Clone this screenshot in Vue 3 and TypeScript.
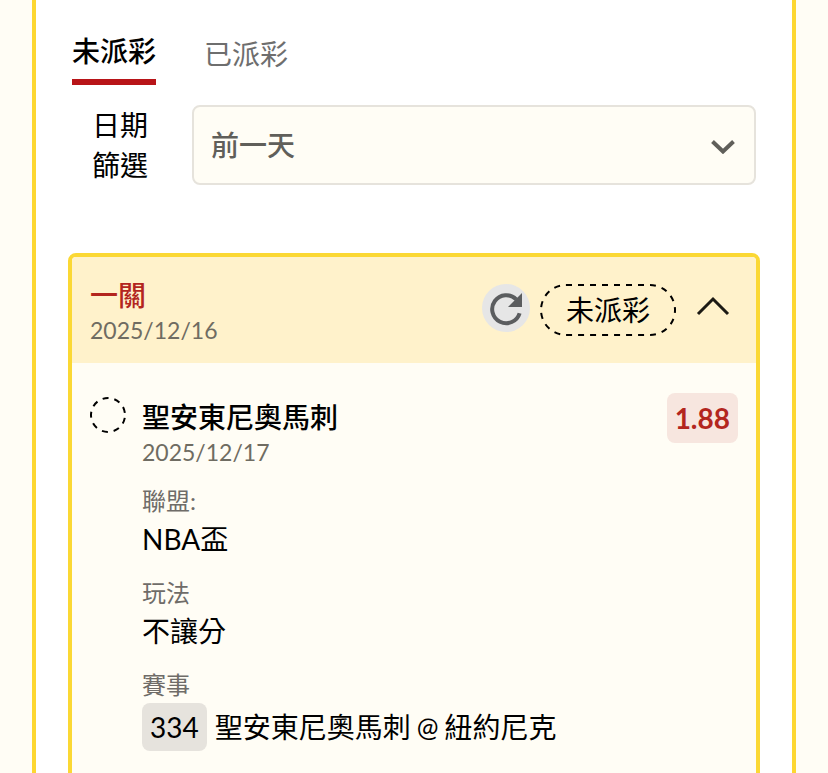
<script setup lang="ts">
import { ref } from 'vue'

interface Detail {
  label: string
  parts: string[]
  code?: string
}

interface Leg {
  name: string
  date: string
  odds: string
  details: Detail[]
}

const tabs = ['未派彩', '已派彩']
const activeTab = ref(0)
const days = ['前一天', '前三天', '前七天']
const day = ref(days[0])
const expanded = ref(true)

const slip = { title: '一關', date: '2025/12/16', status: '未派彩' }

const legs: Leg[] = [
  {
    name: '聖安東尼奧馬刺',
    date: '2025/12/17',
    odds: '1.88',
    details: [
      { label: '聯盟:', parts: ['NBA盃'] },
      { label: '玩法', parts: ['不讓分'] },
      { label: '賽事', parts: ['聖安東尼奧馬刺', '紐約尼克'], code: '334' },
    ],
  },
]
</script>

<template>
  <main class="page">
    <section class="panel">
      <nav class="tabs">
        <button
          v-for="(tab, i) in tabs"
          :key="tab"
          type="button"
          class="tab"
          :class="{ active: i === activeTab }"
          @click="activeTab = i"
        >
          {{ tab }}
        </button>
      </nav>

      <div class="filter">
        <label class="filter-label" for="day">日期<br />篩選</label>
        <div class="select-wrap">
          <select id="day" v-model="day" class="select">
            <option v-for="d in days" :key="d">{{ d }}</option>
          </select>
          <svg class="select-icon" viewBox="0 0 24 14" width="24" height="14" aria-hidden="true">
            <path d="M1.5 1.5 12 11.5 22.5 1.5" fill="none" stroke="#605f5a" stroke-width="4" />
          </svg>
        </div>
      </div>

      <article class="slip">
        <header class="slip-head">
          <div class="slip-info">
            <h2 class="slip-title">{{ slip.title }}</h2>
            <p class="date">{{ slip.date }}</p>
          </div>
          <div class="slip-actions">
            <button type="button" class="refresh">
              <svg viewBox="0 0 48 48" width="48" height="48" aria-hidden="true">
                <path d="M37.6 29.2A14 14 0 1 1 34.2 15.4" fill="none" stroke="#5b5d5f" stroke-width="4" />
                <path d="M40 9V23H26Z" fill="#5b5d5f" />
              </svg>
            </button>
            <span class="status">
              <svg class="status-outline" aria-hidden="true">
                <rect x="1" y="1" rx="25" />
              </svg>
              {{ slip.status }}
            </span>
            <button type="button" class="toggle" @click="expanded = !expanded">
              <svg viewBox="0 0 34 20" width="34" height="20" aria-hidden="true">
                <path d="M2 18 17 3 32 18" fill="none" stroke="#1c1a14" stroke-width="3" />
              </svg>
            </button>
          </div>
        </header>

        <div v-if="expanded" class="slip-body">
          <div v-for="leg in legs" :key="leg.name" class="leg">
            <svg class="leg-mark" viewBox="0 0 36 36" width="36" height="36" aria-hidden="true">
              <circle
                cx="18"
                cy="18"
                r="17"
                fill="none"
                stroke="#000"
                stroke-width="2"
                stroke-dasharray="6 5.87"
                stroke-dashoffset="-2.93"
              />
            </svg>
            <div class="leg-main">
              <h3 class="leg-name">{{ leg.name }}</h3>
              <p class="date">{{ leg.date }}</p>
              <dl class="details">
                <div v-for="item in leg.details" :key="item.label" class="detail">
                  <dt>{{ item.label }}</dt>
                  <dd>
                    <span v-if="item.code" class="code">{{ item.code }}</span>
                    <span class="value">
                      <template v-for="(part, i) in item.parts" :key="part">
                        <span v-if="i > 0" class="at">@</span>
                        <span>{{ part }}</span>
                      </template>
                    </span>
                  </dd>
                </div>
              </dl>
            </div>
            <strong class="odds">{{ leg.odds }}</strong>
          </div>
        </div>
      </article>
    </section>
  </main>
</template>

<style>
body {
  background: #fffdf5;
}
</style>

<style scoped>
.page,
.page * {
  box-sizing: border-box;
}

.page {
  padding: 0 32px;
  background: #fffdf5;
  color: #000;
  font-family: Lato, 'Noto Sans CJK TC', sans-serif;
  font-size: 28px;
  line-height: 40px;
}

button,
select {
  font: inherit;
  color: inherit;
}

button {
  padding: 0;
  border: 0;
  background: none;
  cursor: pointer;
}

h2,
h3,
p,
dl,
dd {
  margin: 0;
  font-size: inherit;
}

.panel {
  min-height: 100vh;
  padding: 23px 32px 32px;
  border: 4px solid #fdd731;
  border-width: 0 4px;
  background: #fff;
}

.tabs {
  display: flex;
  align-items: center;
  gap: 48px;
  padding: 0 4px;
}

.tab {
  line-height: 56px;
  color: #6e6e6e;
}

.tab.active {
  border-bottom: 6px solid #b81418;
  color: #000;
  font-weight: 500;
}

.filter {
  display: flex;
  gap: 44px;
  margin-top: 20px;
  padding: 0 4px;
}

.filter-label {
  padding-left: 20px;
  white-space: nowrap;
}

.select-wrap {
  position: relative;
  flex: 1;
}

.select {
  display: block;
  width: 100%;
  height: 80px;
  padding: 0 60px 0 17px;
  border: 2px solid #e6e3dc;
  border-radius: 8px;
  background: #fffdf5;
  color: #605f5a;
  font-weight: 500;
  appearance: none;
}

.select-icon {
  position: absolute;
  top: 35px;
  right: 21px;
  pointer-events: none;
}

.slip {
  margin-top: 68px;
  overflow: hidden;
  border: 4px solid #fbd834;
  border-radius: 8px;
  background: #fffdf5;
}

.slip-head {
  display: flex;
  justify-content: space-between;
  padding: 18px;
  background: #fff2cb;
}

.slip-title {
  line-height: 40px;
  color: #b3261e;
  font-weight: 500;
}

.date {
  font-size: 23px;
  line-height: 30px;
  color: #6f6c62;
}

.slip-actions {
  display: flex;
  align-items: flex-start;
  gap: 10px;
  padding-top: 9px;
}

.refresh {
  display: flex;
  border-radius: 50%;
  background: #e6e6e6;
}

.status {
  position: relative;
  padding: 4px 26px;
  line-height: 44px;
}

.status-outline {
  position: absolute;
  inset: 0;
  width: 100%;
  height: 100%;
}

.status-outline rect {
  width: calc(100% - 2px);
  height: calc(100% - 2px);
  fill: none;
  stroke: #000;
  stroke-width: 2px;
  stroke-dasharray: 6 6;
}

.toggle {
  display: flex;
  padding: 12px 8px 16px 10px;
}

.slip-body {
  padding: 30px 18px;
}

.leg {
  display: flex;
  align-items: flex-start;
  gap: 16px;
}

.leg-mark {
  flex: none;
  margin-top: 4px;
}

.leg-main {
  flex: 1;
  padding-top: 4px;
}

.leg-name {
  font-weight: 500;
}

.details {
  display: grid;
  gap: 16px;
  margin-top: 16px;
}

.detail dt {
  font-size: 24px;
  line-height: 36px;
  color: #6f6c68;
}

.detail dd {
  display: flex;
  align-items: center;
  gap: 8px;
}

.value {
  display: flex;
  gap: 6px;
}

.at {
  font-size: 26px;
}

.code {
  padding: 0 8px;
  border-radius: 8px;
  background: #e6e3dd;
  line-height: 48px;
}

.odds {
  padding: 0 8px;
  border-radius: 8px;
  background: #f7e6df;
  color: #b3261e;
  font-weight: 700;
  line-height: 50px;
}
</style>
